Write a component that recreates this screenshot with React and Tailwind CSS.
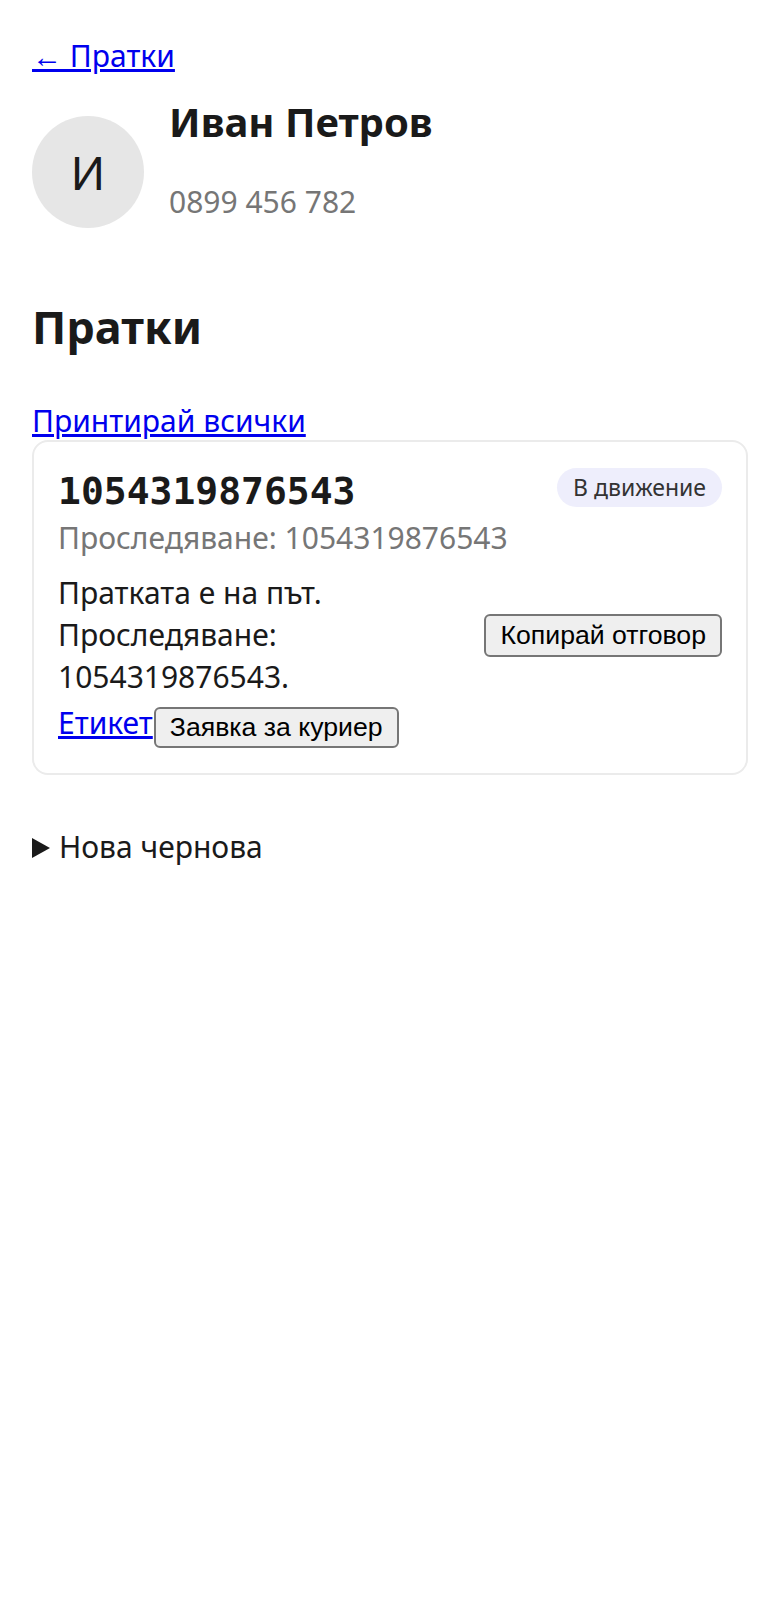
export default function App() {
  return (
    <div className="min-h-[1600px] bg-white px-[32px] pt-[35px] text-[30px] leading-[42px] text-[#1a1a1a] font-['Noto_Sans',sans-serif]">
      <a href="#" className="text-[#0000ee] underline">← Пратки</a>

      <div className="mt-[18px] flex items-start gap-[25px]">
        <div className="mt-[21px] flex h-[112px] w-[112px] shrink-0 items-center justify-center rounded-full bg-[#e6e6e6] text-[46px]">
          И
        </div>
        <div className="mt-[3px]">
          <h1 className="text-[40px] font-bold leading-[48px]">Иван Петров</h1>
          <p className="mt-[35px] text-[#767676]">0899 456 782</p>
        </div>
      </div>

      <h2 className="mt-[70px] text-[45px] font-bold leading-[58px]">Пратки</h2>

      <div className="mt-[44px] h-[40px]">
        <a href="#" className="text-[#0000ee] underline">Принтирай всички</a>
      </div>

      <div className="rounded-[16px] border-2 border-[#ebebeb] px-[24px] pt-[24px] pb-[25px]">
        <div className="flex items-start justify-between">
          <div className="font-['DejaVu_Sans_Mono',monospace] text-[38px] font-bold leading-[51px]">1054319876543</div>
          <span className="mt-[2px] rounded-full bg-[#eeeefc] px-[16px] text-[23px] leading-[39px] text-[#333333]">В движение</span>
        </div>
        <p className="text-[#767676]">Проследяване: 1054319876543</p>

        <div className="mt-[13px] flex items-center justify-between gap-[24px]">
          <p>Пратката е на път. Проследяване: 1054319876543.</p>
          <button className="h-[43px] shrink-0 rounded-[6px] border-2 border-[#767676] bg-[#efefef] px-[14px] font-['Liberation_Sans',Arial,sans-serif] text-[26.67px] leading-[31px] text-black">
            Копирай отговор
          </button>
        </div>

        <div className="mt-[4px] flex items-start">
          <a href="#" className="text-[#0000ee] underline">Етикет</a>
          <button className="mt-[5px] ml-[1px] h-[41px] rounded-[6px] border-2 border-[#767676] bg-[#efefef] px-[14px] font-['Liberation_Sans',Arial,sans-serif] text-[26.67px] leading-[31px] text-black">
            Заявка за куриер
          </button>
        </div>
      </div>

      <details className="mt-[51px]">
        <summary className="cursor-pointer list-none">
          <span className="mr-[9px] inline-block h-0 w-0 border-y-[10px] border-l-[18px] border-y-transparent border-l-[#1a1a1a]"></span>
          Нова чернова
        </summary>
        <p>Тук ще се създаде нова чернова.</p>
      </details>
    </div>
  );
}
